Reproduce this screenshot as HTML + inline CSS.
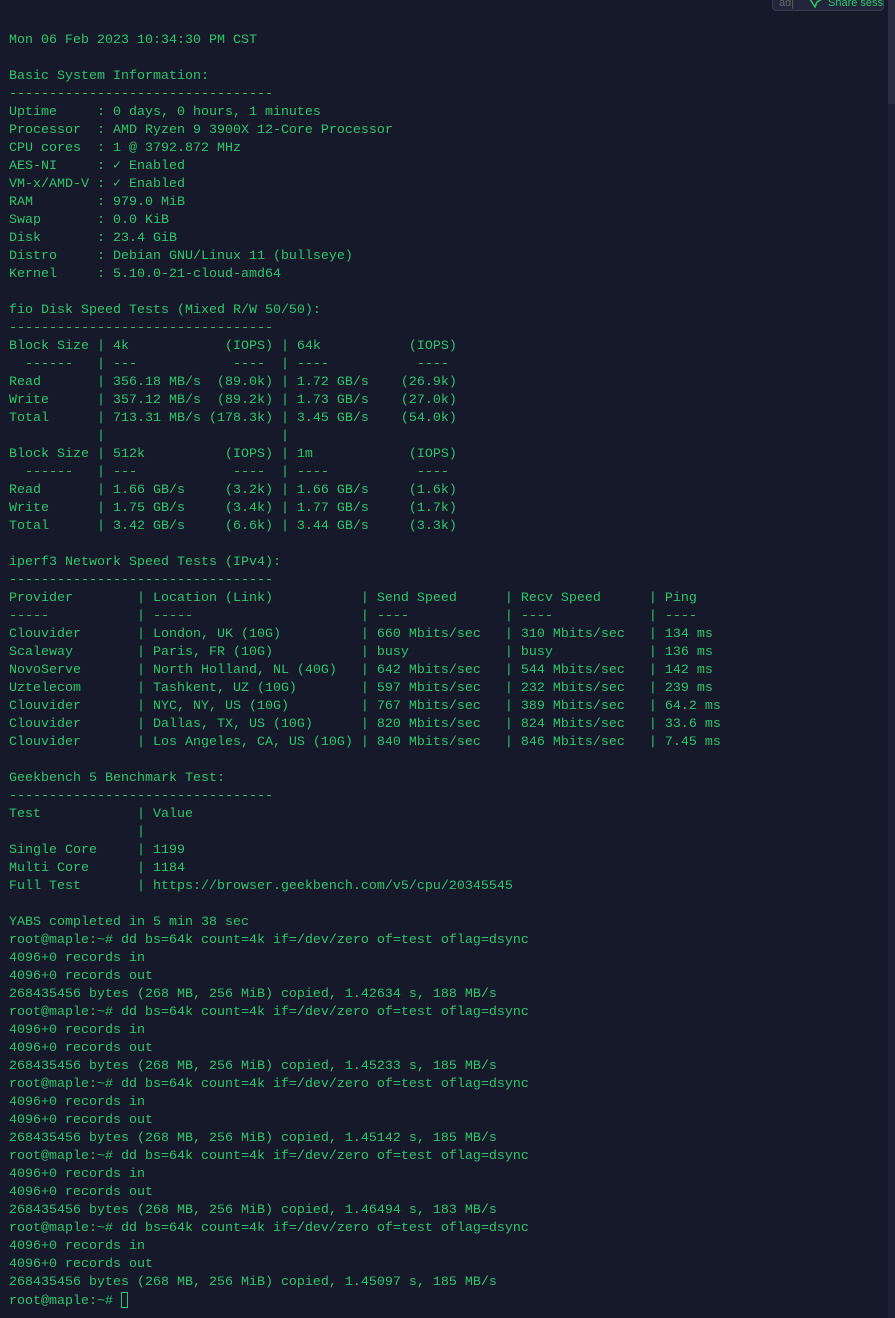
<!DOCTYPE html>
<html><head><meta charset="utf-8"><style>
html,body{margin:0;padding:0;background:#161929;width:895px;height:1318px;overflow:hidden;}
pre{position:absolute;left:9px;top:32px;margin:0;font-family:"Liberation Mono","DejaVu Sans Mono",monospace;font-size:13.33px;line-height:18px;color:#2ec56c;}
.sb{position:absolute;right:0;top:0;width:7px;height:1318px;background:#1d2032;}
.th{position:absolute;right:0;top:0;width:7px;height:104px;background:#2a2d3f;}
.pop{position:absolute;left:772px;top:-12px;width:110px;height:21px;background:#23263a;border:1px solid #3a3d50;border-radius:4px;font:11px "Liberation Sans",sans-serif;color:#2ec56c;white-space:nowrap;overflow:hidden;}
.cur{display:inline-block;width:7px;height:16px;border:1px solid #2ec56c;vertical-align:-4px;box-sizing:border-box;}
</style></head><body>
<div class="pop"><span style="position:absolute;left:6px;top:8px;color:#666">ad|</span><svg style="position:absolute;left:36px;top:9px" width="14" height="10"><path d="M1 1 L6 9 L8 4 L13 1" stroke="#2ec56c" fill="none" stroke-width="1.5"/></svg><span style="position:absolute;left:55px;top:8px;">Share session</span></div>
<div class="sb"><div class="th"></div></div>
<pre>Mon 06 Feb 2023 10:34:30 PM CST

Basic System Information:
---------------------------------
Uptime     : 0 days, 0 hours, 1 minutes
Processor  : AMD Ryzen 9 3900X 12-Core Processor
CPU cores  : 1 @ 3792.872 MHz
AES-NI     : ✓ Enabled
VM-x/AMD-V : ✓ Enabled
RAM        : 979.0 MiB
Swap       : 0.0 KiB
Disk       : 23.4 GiB
Distro     : Debian GNU/Linux 11 (bullseye)
Kernel     : 5.10.0-21-cloud-amd64

fio Disk Speed Tests (Mixed R/W 50/50):
---------------------------------
Block Size | 4k            (IOPS) | 64k           (IOPS)
  ------   | ---            ----  | ----           ----
Read       | 356.18 MB/s  (89.0k) | 1.72 GB/s    (26.9k)
Write      | 357.12 MB/s  (89.2k) | 1.73 GB/s    (27.0k)
Total      | 713.31 MB/s (178.3k) | 3.45 GB/s    (54.0k)
           |                      |
Block Size | 512k          (IOPS) | 1m            (IOPS)
  ------   | ---            ----  | ----           ----
Read       | 1.66 GB/s     (3.2k) | 1.66 GB/s     (1.6k)
Write      | 1.75 GB/s     (3.4k) | 1.77 GB/s     (1.7k)
Total      | 3.42 GB/s     (6.6k) | 3.44 GB/s     (3.3k)

iperf3 Network Speed Tests (IPv4):
---------------------------------
Provider        | Location (Link)           | Send Speed      | Recv Speed      | Ping
-----           | -----                     | ----            | ----            | ----
Clouvider       | London, UK (10G)          | 660 Mbits/sec   | 310 Mbits/sec   | 134 ms
Scaleway        | Paris, FR (10G)           | busy            | busy            | 136 ms
NovoServe       | North Holland, NL (40G)   | 642 Mbits/sec   | 544 Mbits/sec   | 142 ms
Uztelecom       | Tashkent, UZ (10G)        | 597 Mbits/sec   | 232 Mbits/sec   | 239 ms
Clouvider       | NYC, NY, US (10G)         | 767 Mbits/sec   | 389 Mbits/sec   | 64.2 ms
Clouvider       | Dallas, TX, US (10G)      | 820 Mbits/sec   | 824 Mbits/sec   | 33.6 ms
Clouvider       | Los Angeles, CA, US (10G) | 840 Mbits/sec   | 846 Mbits/sec   | 7.45 ms

Geekbench 5 Benchmark Test:
---------------------------------
Test            | Value
                |
Single Core     | 1199
Multi Core      | 1184
Full Test       | https://browser.geekbench.com/v5/cpu/20345545

YABS completed in 5 min 38 sec
root@maple:~# dd bs=64k count=4k if=/dev/zero of=test oflag=dsync
4096+0 records in
4096+0 records out
268435456 bytes (268 MB, 256 MiB) copied, 1.42634 s, 188 MB/s
root@maple:~# dd bs=64k count=4k if=/dev/zero of=test oflag=dsync
4096+0 records in
4096+0 records out
268435456 bytes (268 MB, 256 MiB) copied, 1.45233 s, 185 MB/s
root@maple:~# dd bs=64k count=4k if=/dev/zero of=test oflag=dsync
4096+0 records in
4096+0 records out
268435456 bytes (268 MB, 256 MiB) copied, 1.45142 s, 185 MB/s
root@maple:~# dd bs=64k count=4k if=/dev/zero of=test oflag=dsync
4096+0 records in
4096+0 records out
268435456 bytes (268 MB, 256 MiB) copied, 1.46494 s, 183 MB/s
root@maple:~# dd bs=64k count=4k if=/dev/zero of=test oflag=dsync
4096+0 records in
4096+0 records out
268435456 bytes (268 MB, 256 MiB) copied, 1.45097 s, 185 MB/s
root@maple:~# <span class="cur"></span></pre>
</body></html>
